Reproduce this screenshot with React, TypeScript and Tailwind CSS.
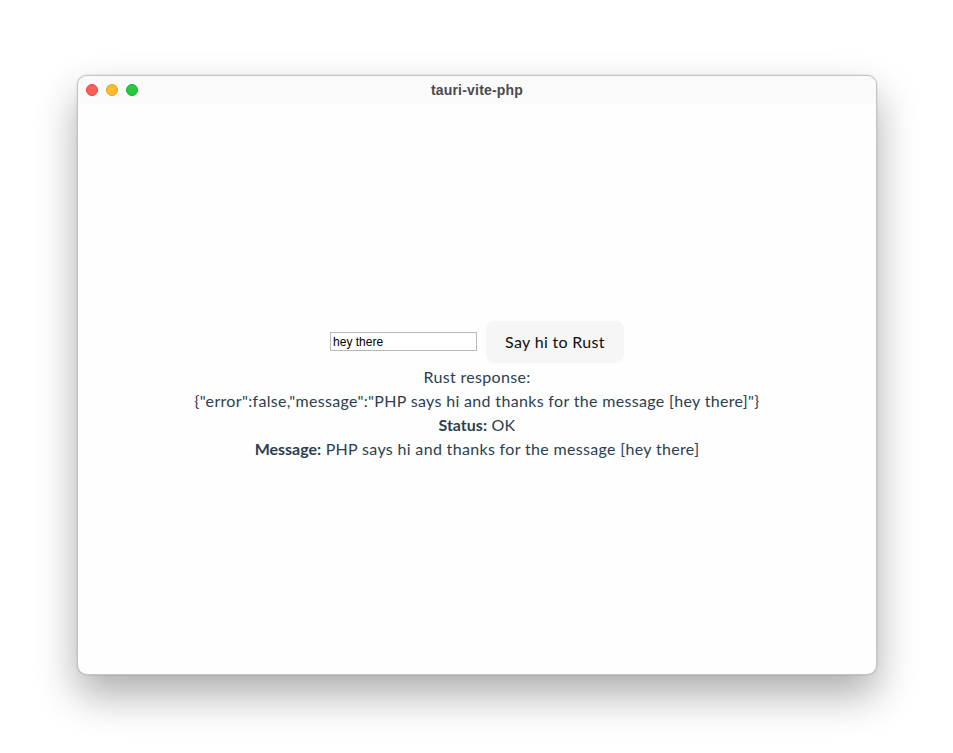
import { useState } from "react";

const TrafficLights = () => (
  <div className="flex items-center gap-[8px] pl-[8px]">
    <span className="block w-[12px] h-[12px] rounded-full bg-[#ff5f57] border border-[#e2463f]" />
    <span className="block w-[12px] h-[12px] rounded-full bg-[#febc2e] border border-[#e1a116]" />
    <span className="block w-[12px] h-[12px] rounded-full bg-[#28c840] border border-[#14ae2b]" />
  </div>
);

export default function App() {
  const [name, setName] = useState("hey there");
  const response = `{"error":false,"message":"PHP says hi and thanks for the message [${name}]"}`;

  return (
    <div className="w-[953px] h-[753px] bg-white pt-[75px] pl-[77px]">
      <div className="w-[800px] h-[600px] rounded-[10px] border border-[#c4c4c4] bg-[#fefefe] overflow-hidden flex flex-col shadow-[0_20px_40px_rgba(0,0,0,0.32),0_0_2px_rgba(0,0,0,0.2)]">
        {/* title bar */}
        <div className="relative h-[28px] bg-[#fafafa] flex items-center shrink-0">
          <TrafficLights />
          <div className="absolute inset-0 flex items-center justify-center text-[14px] font-bold text-[#4a4a4a] tracking-[0.2px] font-['Liberation_Sans',Arial,sans-serif]">
            tauri-vite-php
          </div>
        </div>

        {/* content */}
        <div className="flex-1 flex flex-col items-center justify-center text-[#2c3e50] text-[16px] leading-[24px] tracking-[0.33px] font-['Lato','Noto_Sans',sans-serif] pt-[3px]">
          <div className="flex items-center gap-[9px] mb-[2px]">
            <input
              value={name}
              onChange={(e) => setName(e.target.value)}
              className="w-[147px] h-[19px] border border-[#b8b8b8] bg-white px-[2px] text-[12px] tracking-normal text-black font-['Liberation_Sans',Arial,sans-serif] outline-none"
            />
            <button className="h-[42px] px-[19px] rounded-[8px] bg-[#f6f6f6] text-[#0f0f0f] text-[16px]">
              Say hi to Rust
            </button>
          </div>
          <p>Rust response:</p>
          <p>{response}</p>
          <p>
            <b className="tracking-normal">Status:</b> OK
          </p>
          <p>
            <b className="tracking-normal">Message:</b> PHP says hi and thanks for the message [{name}]
          </p>
        </div>
      </div>
    </div>
  );
}
